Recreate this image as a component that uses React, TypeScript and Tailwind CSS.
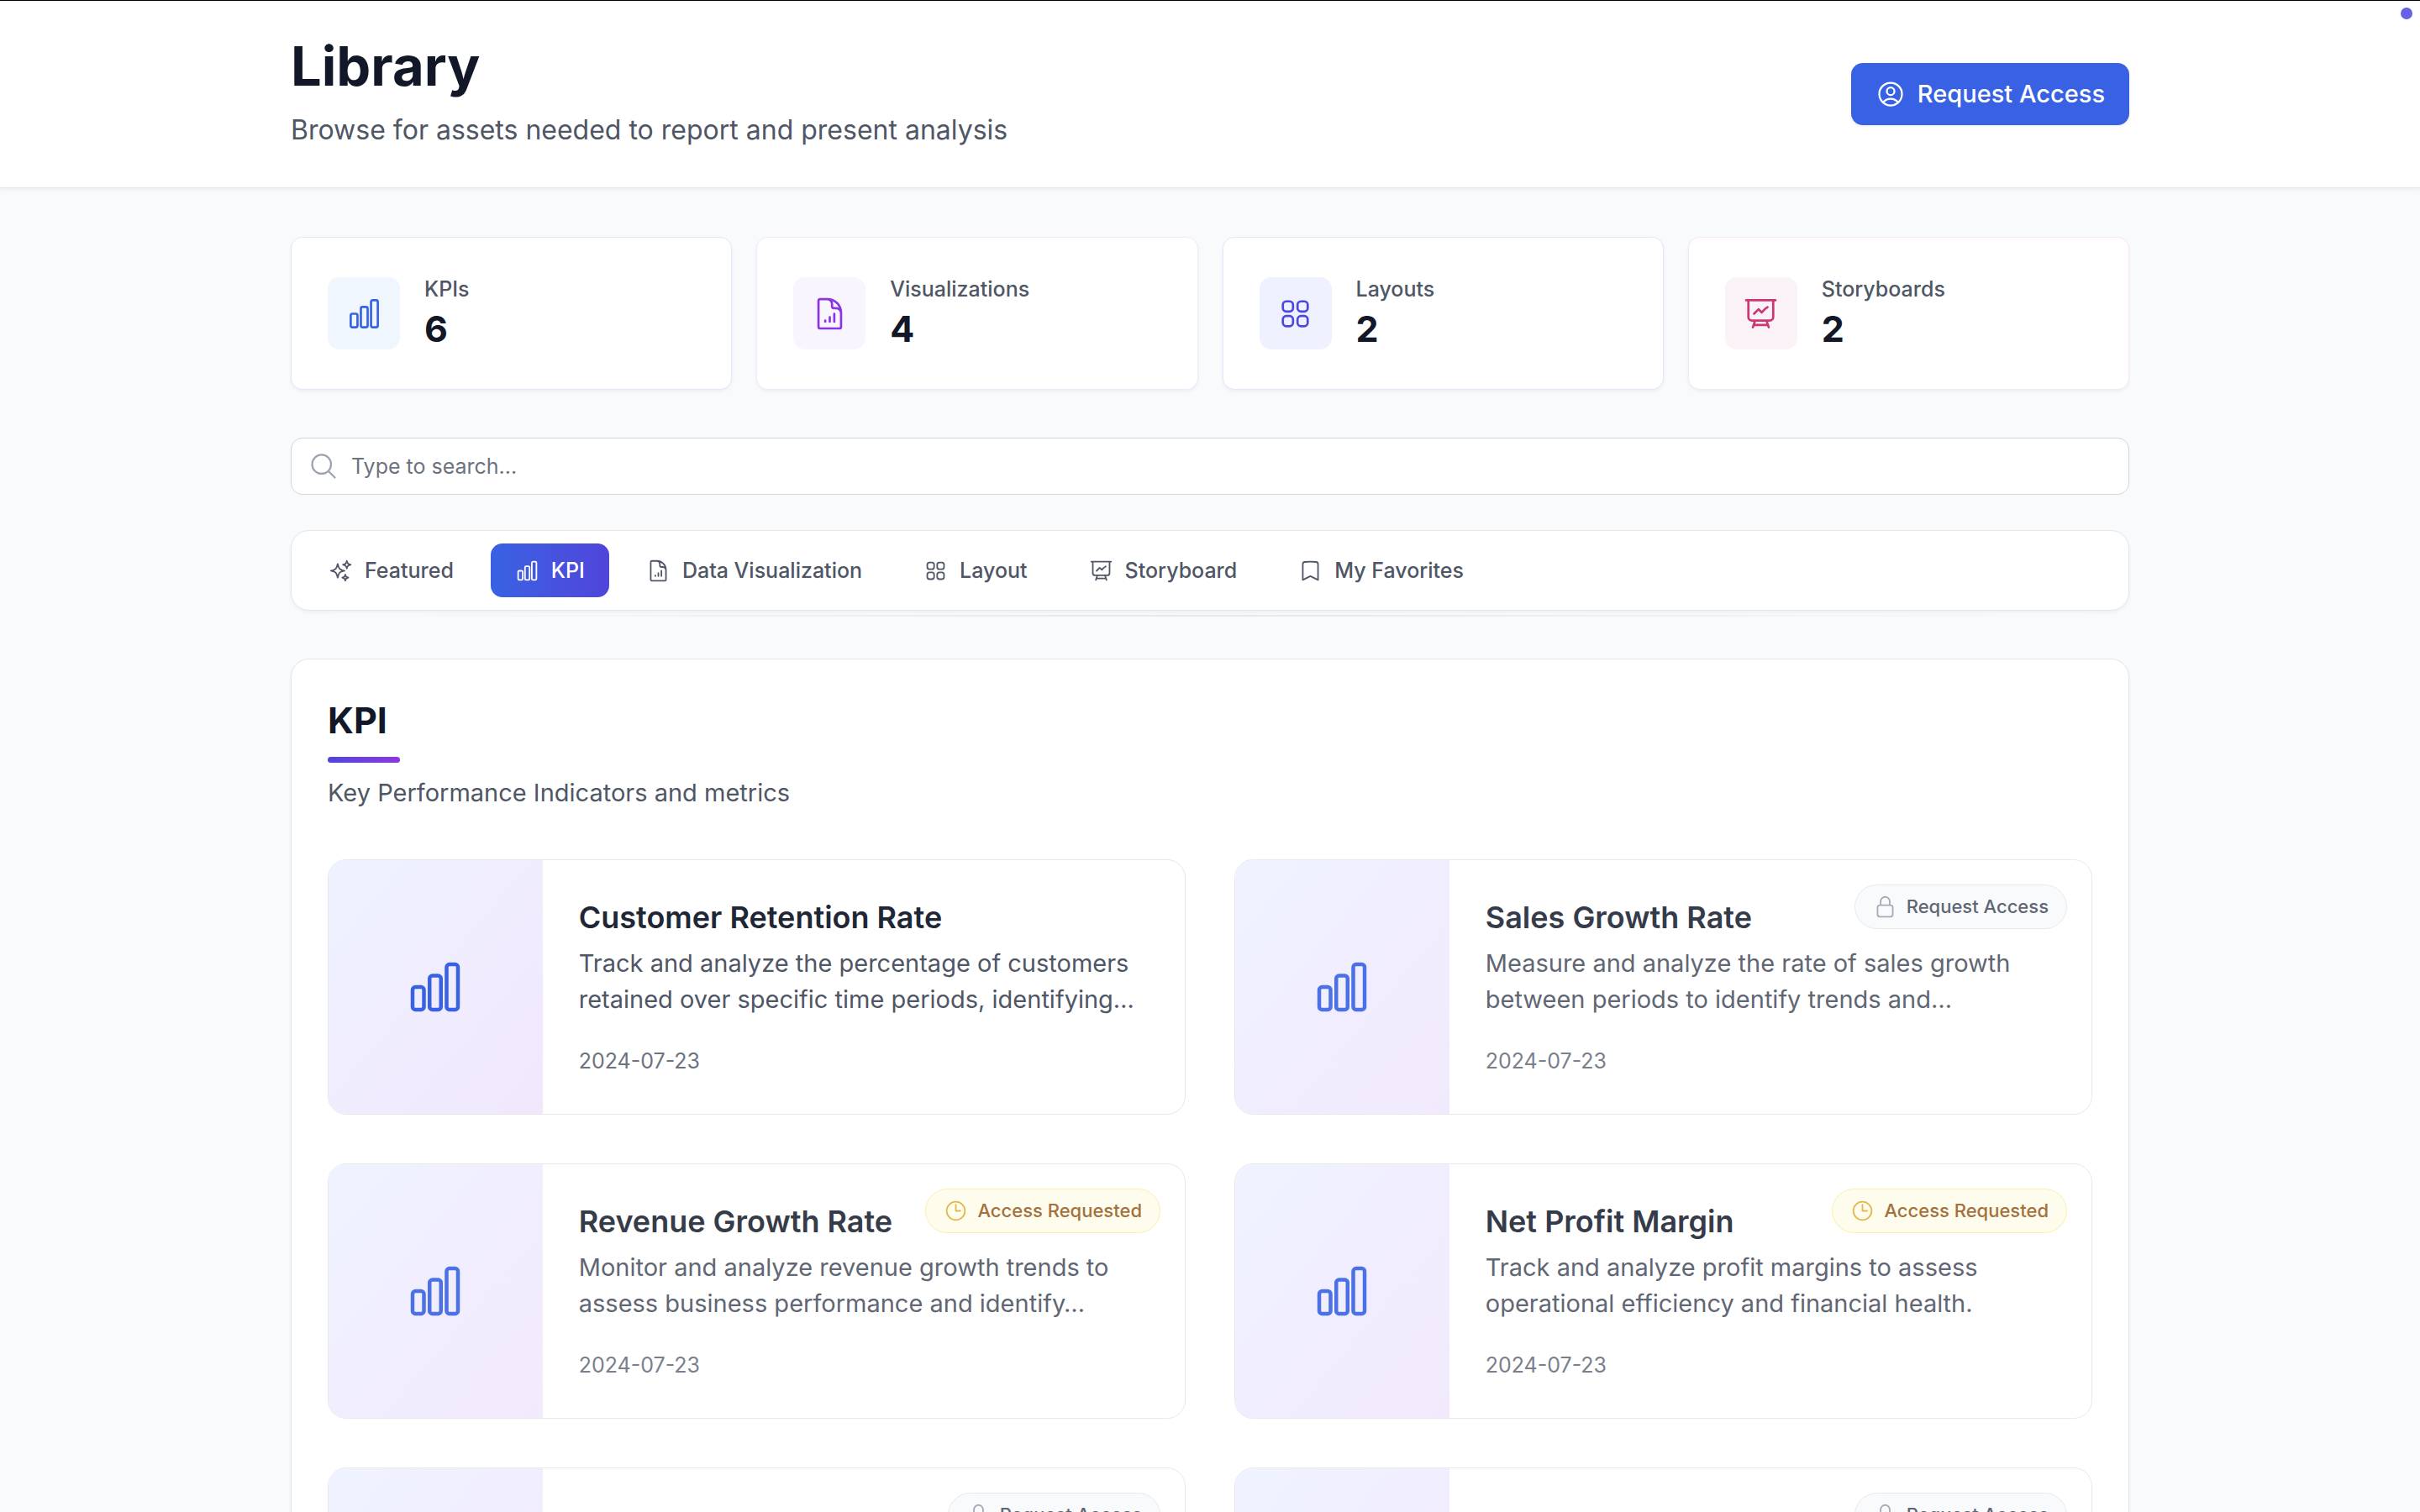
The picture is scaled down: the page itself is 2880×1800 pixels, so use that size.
import type { IconType } from "react-icons";
import {
  HiOutlineBookmark,
  HiOutlineChartBar,
  HiOutlineClock,
  HiOutlineDocumentChartBar,
  HiOutlineLockClosed,
  HiOutlineMagnifyingGlass,
  HiOutlinePresentationChartLine,
  HiOutlineSparkles,
  HiOutlineSquares2X2,
  HiOutlineUserCircle,
} from "react-icons/hi2";

type Stat = { label: string; value: number; icon: IconType; border: string; tile: string };
type Tab = { label: string; icon: IconType; active?: boolean };
type Access = "open" | "locked" | "requested";
type Asset = { id: number; title?: string; description?: string; date?: string; access: Access };

const stats: Stat[] = [
  { label: "KPIs", value: 6, icon: HiOutlineChartBar, border: "border-[#dfe9fb]", tile: "bg-[#f0f6fe] text-[#3862e3]" },
  { label: "Visualizations", value: 4, icon: HiOutlineDocumentChartBar, border: "border-[#f0e9fc]", tile: "bg-[#f8f5fe] text-[#8b36e0]" },
  { label: "Layouts", value: 2, icon: HiOutlineSquares2X2, border: "border-[#e2e7fd]", tile: "bg-[#eff2fe] text-[#4d48dd]" },
  { label: "Storyboards", value: 2, icon: HiOutlinePresentationChartLine, border: "border-[#f8e8f1]", tile: "bg-[#fbf2f7] text-[#cb3673]" },
];

const tabs: Tab[] = [
  { label: "Featured", icon: HiOutlineSparkles },
  { label: "KPI", icon: HiOutlineChartBar, active: true },
  { label: "Data Visualization", icon: HiOutlineDocumentChartBar },
  { label: "Layout", icon: HiOutlineSquares2X2 },
  { label: "Storyboard", icon: HiOutlinePresentationChartLine },
  { label: "My Favorites", icon: HiOutlineBookmark },
];

const assets: Asset[] = [
  {
    id: 1,
    title: "Customer Retention Rate",
    description: "Track and analyze the percentage of customers retained over specific time periods, identifying…",
    date: "2024-07-23",
    access: "open",
  },
  {
    id: 2,
    title: "Sales Growth Rate",
    description: "Measure and analyze the rate of sales growth between periods to identify trends and…",
    date: "2024-07-23",
    access: "locked",
  },
  {
    id: 3,
    title: "Revenue Growth Rate",
    description: "Monitor and analyze revenue growth trends to assess business performance and identify…",
    date: "2024-07-23",
    access: "requested",
  },
  {
    id: 4,
    title: "Net Profit Margin",
    description: "Track and analyze profit margins to assess operational efficiency and financial health.",
    date: "2024-07-23",
    access: "requested",
  },
  { id: 5, access: "locked" },
  { id: 6, access: "locked" },
];

function StatCard({ label, value, icon: Icon, border, tile }: Stat) {
  return (
    <div className={`flex items-center gap-[29px] rounded-[14px] border bg-white p-[43px] shadow-[0_2px_4px_rgb(0_0_0/0.05)] ${border}`}>
      <div className={`flex size-[86px] items-center justify-center rounded-[14px] ${tile}`}>
        <Icon className="size-[43px]" />
      </div>
      <div>
        <p className="text-[25px] leading-[36px] font-medium text-[#4f5665]">{label}</p>
        <p className="text-[43px] leading-[58px] font-bold text-[#121827]">{value}</p>
      </div>
    </div>
  );
}

function AccessBadge({ access }: { access: Access }) {
  if (access === "open") return null;
  const requested = access === "requested";
  const Icon = requested ? HiOutlineClock : HiOutlineLockClosed;
  return (
    <button
      type="button"
      className={`absolute top-[29px] right-[29px] flex items-center gap-[11px] rounded-full border px-[21px] py-[11px] text-[22px] leading-[29px] font-medium ${
        requested ? "border-[#fbeea0] bg-[#fefcea] text-[#99622a]" : "border-[#e5e7eb] bg-[#f9fafb] text-[#4f5665]"
      }`}
    >
      <Icon className={`size-[29px] ${requested ? "text-[#e2b13f]" : "text-[#9ca3af]"}`} />
      {requested ? "Access Requested" : "Request Access"}
    </button>
  );
}

function AssetCard({ title, description, date, access }: Asset) {
  return (
    <article
      className={`relative flex min-h-[304px] overflow-hidden rounded-[22px] border border-[#e5e7eb] bg-white ${
        access === "open" ? "" : "opacity-90"
      }`}
    >
      <div className="flex w-1/4 shrink-0 items-center justify-center bg-linear-to-br from-[#eef2ff] to-[#f1e7fd] text-[#3862e3]">
        <HiOutlineChartBar className="size-[72px]" />
      </div>
      <div className="flex flex-1 flex-col p-[43px]">
        <h3 className="mb-[8px] text-[36px] leading-[50px] font-semibold text-[#1f2736]">{title}</h3>
        <p className="line-clamp-2 text-[29px] leading-[43px] text-[#4f5665]">{description}</p>
        <p className="mt-[34px] text-[25px] leading-[36px] text-[#6d727f]">{date}</p>
      </div>
      <AccessBadge access={access} />
    </article>
  );
}

export default function App() {
  return (
    <div className="relative min-h-screen border-t border-black bg-[#f9fafc] font-['Inter',sans-serif]">
      <span className="absolute top-[8px] right-[9px] size-[14px] rounded-full bg-[#6562e6]" />

      <header className="border-b border-[#e5e7eb] bg-white shadow-[0_2px_4px_rgb(0_0_0/0.05)]">
        <div className="mx-auto flex max-w-[2304px] items-center justify-between px-[58px] py-[43px]">
          <div>
            <h1 className="text-[65px] leading-[70px] font-bold text-[#121827]">Library</h1>
            <p className="mt-[16px] text-[32px] leading-[50px] text-[#4f5665]">
              Browse for assets needed to report and present analysis
            </p>
          </div>
          <button
            type="button"
            className="flex items-center gap-[14px] rounded-[14px] bg-[#3862e3] px-[29px] py-[15px] text-[29px] leading-[44px] font-medium text-white shadow-[0_2px_4px_rgb(0_0_0/0.05)]"
          >
            <HiOutlineUserCircle className="size-[36px]" />
            Request Access
          </button>
        </div>
      </header>

      <main className="mx-auto max-w-[2304px] px-[58px] py-[58px]">
        <section className="grid grid-cols-4 gap-[29px]">
          {stats.map((stat) => (
            <StatCard key={stat.label} {...stat} />
          ))}
        </section>

        <div className="relative mt-[57px]">
          <HiOutlineMagnifyingGlass className="pointer-events-none absolute top-[16px] left-[21px] size-[36px] text-[#9ca3af]" />
          <input
            type="search"
            aria-label="Search the library"
            placeholder="Type to search..."
            className="block w-full rounded-[14px] border border-[#d2d5da] bg-white py-[15px] pr-[22px] pl-[71px] text-[25px] leading-[36px] text-[#121827] placeholder:text-[#6d727f]"
          />
        </div>

        <div className="relative mt-[42px]">
          <nav className="flex gap-[15px] rounded-[22px] border border-[#e5e7eb] bg-white p-[15px] shadow-[0_2px_4px_rgb(0_0_0/0.05)]">
            {tabs.map(({ label, icon: Icon, active }) => (
              <button
                key={label}
                type="button"
                className={`flex items-center gap-[14px] rounded-[14px] px-[29px] py-[14px] text-[25px] leading-[36px] font-medium ${
                  active ? "bg-linear-to-r from-[#3862e3] to-[#4f44db] text-white" : "text-[#4f5665]"
                }`}
              >
                <Icon className="size-[29px]" />
                {label}
              </button>
            ))}
          </nav>
          <div className="absolute inset-x-0 -bottom-[7px] h-[2px] bg-linear-to-r from-transparent via-[#e5e7eb] to-transparent" />
        </div>

        <section className="mt-[57px] rounded-[22px] border border-[#e5e7eb] bg-white p-[43px] shadow-[0_2px_4px_rgb(0_0_0/0.05)]">
          <h2 className="text-[43px] leading-[58px] font-bold text-[#121827]">KPI</h2>
          <div className="mt-[15px] h-[7px] w-[86px] rounded-full bg-linear-to-r from-[#4f44db] to-[#8b36e0]" />
          <p className="mt-[14px] text-[29px] leading-[43px] text-[#4f5665]">Key Performance Indicators and metrics</p>
          <div className="mt-[58px] grid grid-cols-2 gap-[58px]">
            {assets.map((asset) => (
              <AssetCard key={asset.id} {...asset} />
            ))}
          </div>
        </section>
      </main>
    </div>
  );
}
